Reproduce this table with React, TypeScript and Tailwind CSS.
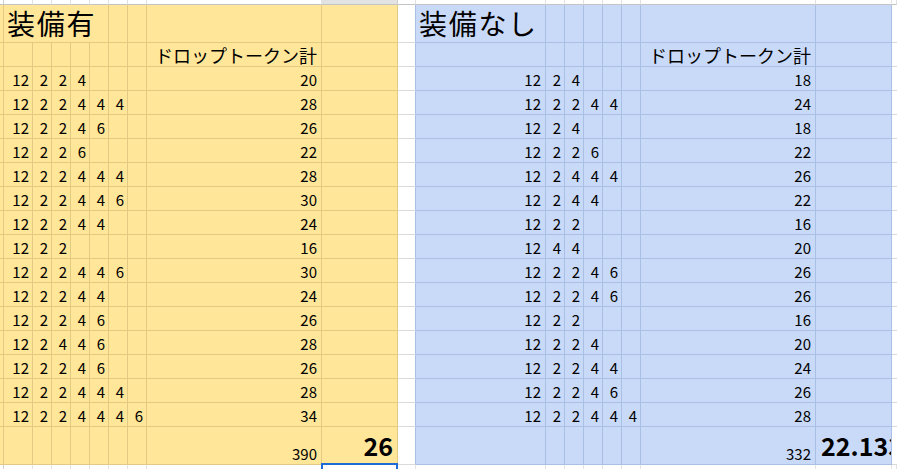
import React from "react";

type Kind = "num" | "numW" | "kata" | "title" | "sum" | "big" | "bigL";
type Cell = { span?: number; text?: string; kind?: Kind };

const leftRows: number[][] = [
  [12, 2, 2, 4],
  [12, 2, 2, 4, 4, 4],
  [12, 2, 2, 4, 6],
  [12, 2, 2, 6],
  [12, 2, 2, 4, 4, 4],
  [12, 2, 2, 4, 4, 6],
  [12, 2, 2, 4, 4],
  [12, 2, 2],
  [12, 2, 2, 4, 4, 6],
  [12, 2, 2, 4, 4],
  [12, 2, 2, 4, 6],
  [12, 2, 4, 4, 6],
  [12, 2, 2, 4, 6],
  [12, 2, 2, 4, 4, 4],
  [12, 2, 2, 4, 4, 4, 6],
];

const rightRows: number[][] = [
  [12, 2, 4],
  [12, 2, 2, 4, 4],
  [12, 2, 4],
  [12, 2, 2, 6],
  [12, 2, 4, 4, 4],
  [12, 2, 4, 4],
  [12, 2, 2],
  [12, 4, 4],
  [12, 2, 2, 4, 6],
  [12, 2, 2, 4, 6],
  [12, 2, 2],
  [12, 2, 2, 4],
  [12, 2, 2, 4, 4],
  [12, 2, 2, 4, 6],
  [12, 2, 2, 4, 4, 4],
];

const sum = (a: number[]) => a.reduce((s, v) => s + v, 0);

const kindCls: Record<Kind, string> = {
  num: "justify-end overflow-hidden text-[15px] leading-[15px] pr-[3px] pb-[3px]",
  numW: "justify-end overflow-hidden text-[15px] leading-[15px] pr-[4px] pb-[3px]",
  kata: "justify-end overflow-hidden text-[18px] leading-[18px] pr-[4px] pb-[2px]",
  title: "justify-start overflow-visible text-[28px] leading-[28px] tracking-[1.7px] pl-[3px] pb-[5px]",
  sum: "justify-end overflow-hidden text-[15px] leading-[15px] pr-[4px] pb-[3px]",
  big: "justify-end overflow-hidden text-[25px] leading-[25px] font-bold pr-[4px] pb-[6px]",
  bigL: "justify-start overflow-hidden text-[25px] leading-[25px] font-bold pl-[5px] pb-[6px]",
};

const zone = (c: number) => (c <= 9 ? "Y" : c === 10 || c === 19 ? "W" : "B");

function bodyCls(c: number) {
  const z = zone(c);
  if (z === "Y") return "bg-[#ffe699] border-r border-b border-[#e3ca82]";
  if (z === "B") return "bg-[#c9daf8] border-r border-b border-[#aabfe4]";
  if (c === 10) return "bg-white border-r border-b border-[#dadada] border-r-[#aabfe4]";
  return "bg-white border-b border-[#dadada]";
}

function headCls(c: number) {
  if (c === 9) return "bg-[#e2e2e2] border-r border-b border-[#d0d0d0] border-b-[#c4c4c4]";
  if (c === 0) return "bg-white border-r border-b border-[#d0d0d0] border-b-[#c4c4c4]";
  return "bg-white border-r border-b border-[#e0e0e0] border-b-[#c4c4c4]";
}

function footCls(c: number) {
  if (c === 0) return "bg-white border-r border-[#d0d0d0]";
  return "bg-white border-r border-[#e3e3e3]";
}

function buildRows(): Cell[][] {
  const rows: Cell[][] = [];
  const empty = (): Cell[] => Array.from({ length: 20 }, () => ({} as Cell));

  const r1: Cell[] = [];
  r1.push({});
  r1.push({ span: 5, text: "装備有", kind: "title" });
  for (let c = 6; c < 20; c++) r1.push(c === 11 ? { text: "装備なし", kind: "title" } : {});
  rows.push(r1);

  const r2 = empty();
  r2[8] = { text: "ドロップトークン計", kind: "kata" };
  r2[17] = { text: "ドロップトークン計", kind: "kata" };
  rows.push(r2);

  for (let i = 0; i < 15; i++) {
    const r = empty();
    leftRows[i].forEach((v, j) => {
      r[1 + j] = { text: String(v), kind: "num" };
    });
    r[8] = { text: String(sum(leftRows[i])), kind: "numW" };
    rightRows[i].forEach((v, j) => {
      r[11 + j] = { text: String(v), kind: j === 0 ? "numW" : "num" };
    });
    r[17] = { text: String(sum(rightRows[i])), kind: "numW" };
    rows.push(r);
  }

  const rt = empty();
  rt[8] = { text: "390", kind: "sum" };
  rt[9] = { text: "26", kind: "big" };
  rt[17] = { text: "332", kind: "sum" };
  rt[18] = { text: "22.13333", kind: "bigL" };
  rows.push(rt);
  return rows;
}

export default function App() {
  const rows = buildRows();
  return (
    <div className="relative w-[897px] h-[469px] overflow-hidden bg-white text-black font-['Noto_Sans_CJK_JP','Noto_Sans',sans-serif]">
      <div className="grid w-[897px] h-[469px] grid-cols-[4px_29px_19px_19px_19px_19px_19px_19px_175px_76px_18px_130px_19px_19px_19px_19px_19px_175px_76px_1fr] grid-rows-[5px_38px_repeat(16,24px)_38px_1fr]">
        {Array.from({ length: 20 }, (_, c) => (
          <div key={`h${c}`} className={headCls(c)} />
        ))}
        {rows.map((row, ri) => {
          let col = 0;
          return row.map((cell, ci) => {
            const c = col;
            const span = cell.span ?? 1;
            col += span;
            const base = bodyCls(c);
            const kc = cell.kind ? kindCls[cell.kind] : "overflow-hidden";
            return (
              <div
                key={`r${ri}c${ci}`}
                className={`${base} ${span === 5 ? "col-span-5" : ""} flex items-end whitespace-nowrap ${kc}`}
              >
                {cell.text ? <span>{cell.text}</span> : null}
              </div>
            );
          });
        })}
        {Array.from({ length: 20 }, (_, c) => (
          <div key={`f${c}`} className={footCls(c)} />
        ))}
      </div>
      <div className="absolute left-[321px] top-[463px] w-[77px] h-[20px] border-2 border-[#1f6bd6]" />
    </div>
  );
}
